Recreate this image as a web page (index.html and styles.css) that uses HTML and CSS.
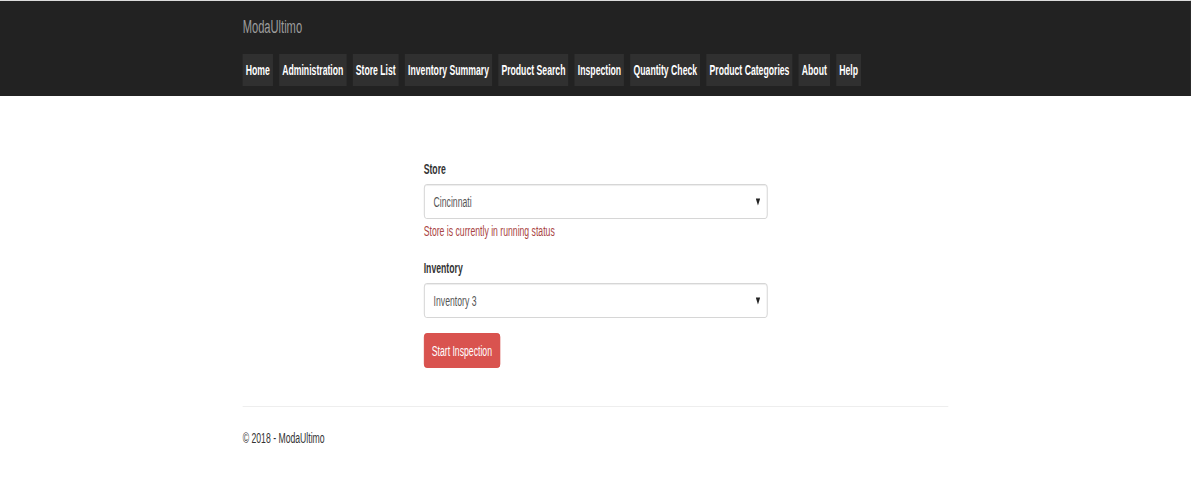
FILE: index.html
```html
<!DOCTYPE html>
<html lang="en">
<head>
<meta charset="utf-8">
<title>Inspection - ModaUltimo</title>
<link rel="stylesheet" href="styles.css">
</head>
<body>
<div class="viewport">
<div class="page">
  <header class="navbar">
    <div class="container">
      <div class="brand">ModaUltimo</div>
      <ul class="nav">
        <li><a href="#">Home</a></li>
        <li><a href="#">Administration</a></li>
        <li><a href="#">Store List</a></li>
        <li><a href="#">Inventory Summary</a></li>
        <li><a href="#">Product Search</a></li>
        <li><a href="#">Inspection</a></li>
        <li><a href="#">Quantity Check</a></li>
        <li><a href="#">Product Categories</a></li>
        <li><a href="#">About</a></li>
        <li><a href="#">Help</a></li>
      </ul>
    </div>
  </header>

  <main class="container body-content">
    <div class="row">
      <form class="form-col">
        <div class="form-group">
          <label class="label">Store</label>
          <div class="select">
            <span>Cincinnati</span>
            <svg class="caret" width="7" height="8" viewBox="0 0 7 8"><path d="M0 0.5 H7 L3.5 7.5 Z" fill="#222"/></svg>
          </div>
          <p class="help-text">Store is currently in running status</p>
        </div>
        <div class="form-group">
          <label class="label">Inventory</label>
          <div class="select">
            <span>Inventory 3</span>
            <svg class="caret" width="7" height="8" viewBox="0 0 7 8"><path d="M0 0.5 H7 L3.5 7.5 Z" fill="#222"/></svg>
          </div>
        </div>
        <button type="button" class="btn-danger">Start Inspection</button>
      </form>
    </div>
    <hr class="divider">
    <footer class="footer">
      <p>&copy; 2018 - ModaUltimo</p>
    </footer>
  </main>
</div>
</div>
</body>
</html>
```

FILE: styles.css
```css
html, body {
  margin: 0;
  padding: 0;
  background: #fff;
  overflow: hidden;
}

body {
  font-family: "Liberation Sans", Arial, sans-serif;
  font-size: 14px;
  line-height: 20px;
  color: #333;
}

.viewport {
  width: 100%;
  overflow: hidden;
}

/* The reference is a wide page rendered horizontally condensed */
.page {
  width: 1924px;
  transform: scaleX(0.619);
  transform-origin: 0 0;
}

.container {
  width: 1170px;
  margin: 0 auto;
  padding: 0 15px;
  box-sizing: border-box;
}

.navbar {
  border-top: 1px solid #dcdcdc;
  background: #222;
  height: 96px;
  box-sizing: border-box;
}

.brand {
  font-size: 18px;
  line-height: 20px;
  color: #9d9d9d;
  padding: 16px 0 14px;
}

.nav {
  list-style: none;
  margin: 0;
  padding: 3px 0 10px;
  display: flex;
  gap: 10px;
}

.nav a {
  display: block;
  padding: 6px 5px;
  background: #303030;
  color: #fff;
  font-weight: bold;
  text-decoration: none;
}

.body-content {
  padding-top: 63px;
}

.row {
  margin: 0 -15px;
}

.form-col {
  width: 585px;
  margin: 0 0 0 292.5px;
  padding: 0 15px;
  box-sizing: border-box;
}

.form-group {
  margin-bottom: 15px;
}

.label {
  display: block;
  font-weight: bold;
  margin-bottom: 5px;
}

.select {
  height: 35px;
  box-sizing: border-box;
  border: 1px solid #ccc;
  border-radius: 4px;
  box-shadow: inset 0 1px 1px rgba(0, 0, 0, 0.075);
  padding: 6px 11px 6px 15px;
  display: flex;
  align-items: center;
  justify-content: space-between;
  color: #555;
  background: #fff;
}

.caret {
  display: block;
  margin-top: 1px;
}

.help-text {
  margin: 2px 0 17px;
  color: #a94442;
}

.btn-danger {
  font-family: "Liberation Sans", Arial, sans-serif;
  font-size: 14px;
  line-height: 20px;
  height: 35px;
  padding: 6px 12px;
  color: #fff;
  background: #d9534f;
  border: 1px solid #d43f3a;
  border-radius: 4px;
  display: block;
}

.divider {
  margin: 38px 0 21px;
  border: 0;
  border-top: 1px solid #eee;
}

.footer p {
  margin: 0;
}
```
